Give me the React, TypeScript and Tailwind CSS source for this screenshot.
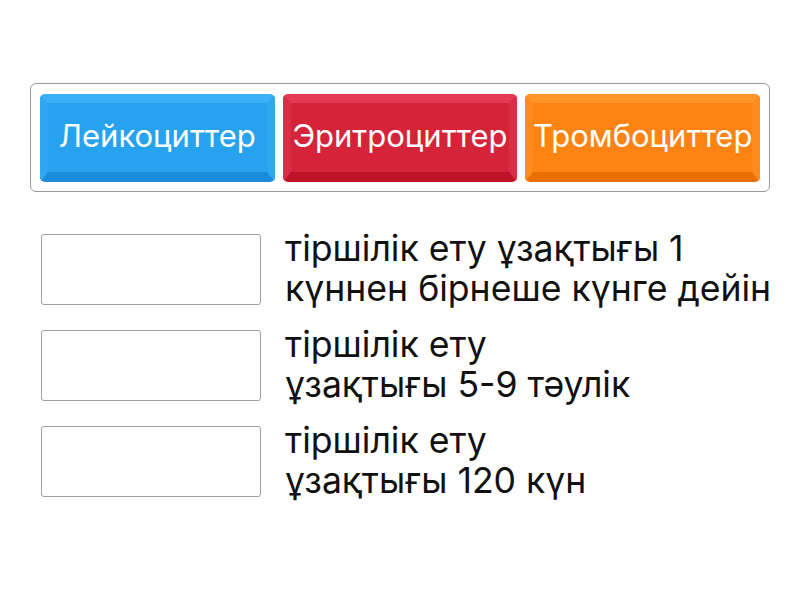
const cards = [
  {
    label: 'Лейкоциттер',
    cls: 'bg-[#26a2ee] border-t-[#3db1f8] border-x-[#2ea8f3] border-b-[#1a8cda]',
  },
  {
    label: 'Эритроциттер',
    cls: 'bg-[#d5233a] border-t-[#e43a50] border-x-[#db2d43] border-b-[#bf1329]',
  },
  {
    label: 'Тромбоциттер',
    cls: 'bg-[#fd8412] border-t-[#ff9526] border-x-[#fe8b1b] border-b-[#ec6f06]',
  },
];

const rows = [
  ['тіршілік ету ұзақтығы 1', 'күннен бірнеше күнге дейін'],
  ['тіршілік ету', 'ұзақтығы 5-9 тәулік'],
  ['тіршілік ету', 'ұзақтығы 120 күн'],
];

export default function App() {
  return (
    <div className="h-[600px] w-[800px] overflow-hidden bg-white font-['Inter',sans-serif]">
      <div className="px-[30px] pt-[83px]">
        <div className="grid grid-cols-3 gap-2 rounded-md border border-[#9a9a9a] px-[9px] pt-[10px] pb-[9px]">
          {cards.map((c) => (
            <div
              key={c.label}
              className={`flex h-[88px] items-center justify-center whitespace-nowrap rounded-[5px] border-x-[8px] border-t-[9px] border-b-[10px] pb-[3px] text-[31px] text-white ${c.cls}`}
            >
              {c.label}
            </div>
          ))}
        </div>
      </div>

      <div className="mt-[42px] flex flex-col gap-[25px] pl-[41px]">
        {rows.map((r, i) => (
          <div key={i} className="flex h-[71px] items-center">
            <div className="h-[71px] w-[220px] shrink-0 rounded-[3px] border border-[#a0a0a0]" />
            <div className="ml-[24px] whitespace-nowrap pb-[2px] text-[35.6px] leading-[40px] text-[#111]">
              {r[0]}
              <br />
              {r[1]}
            </div>
          </div>
        ))}
      </div>
    </div>
  );
}
